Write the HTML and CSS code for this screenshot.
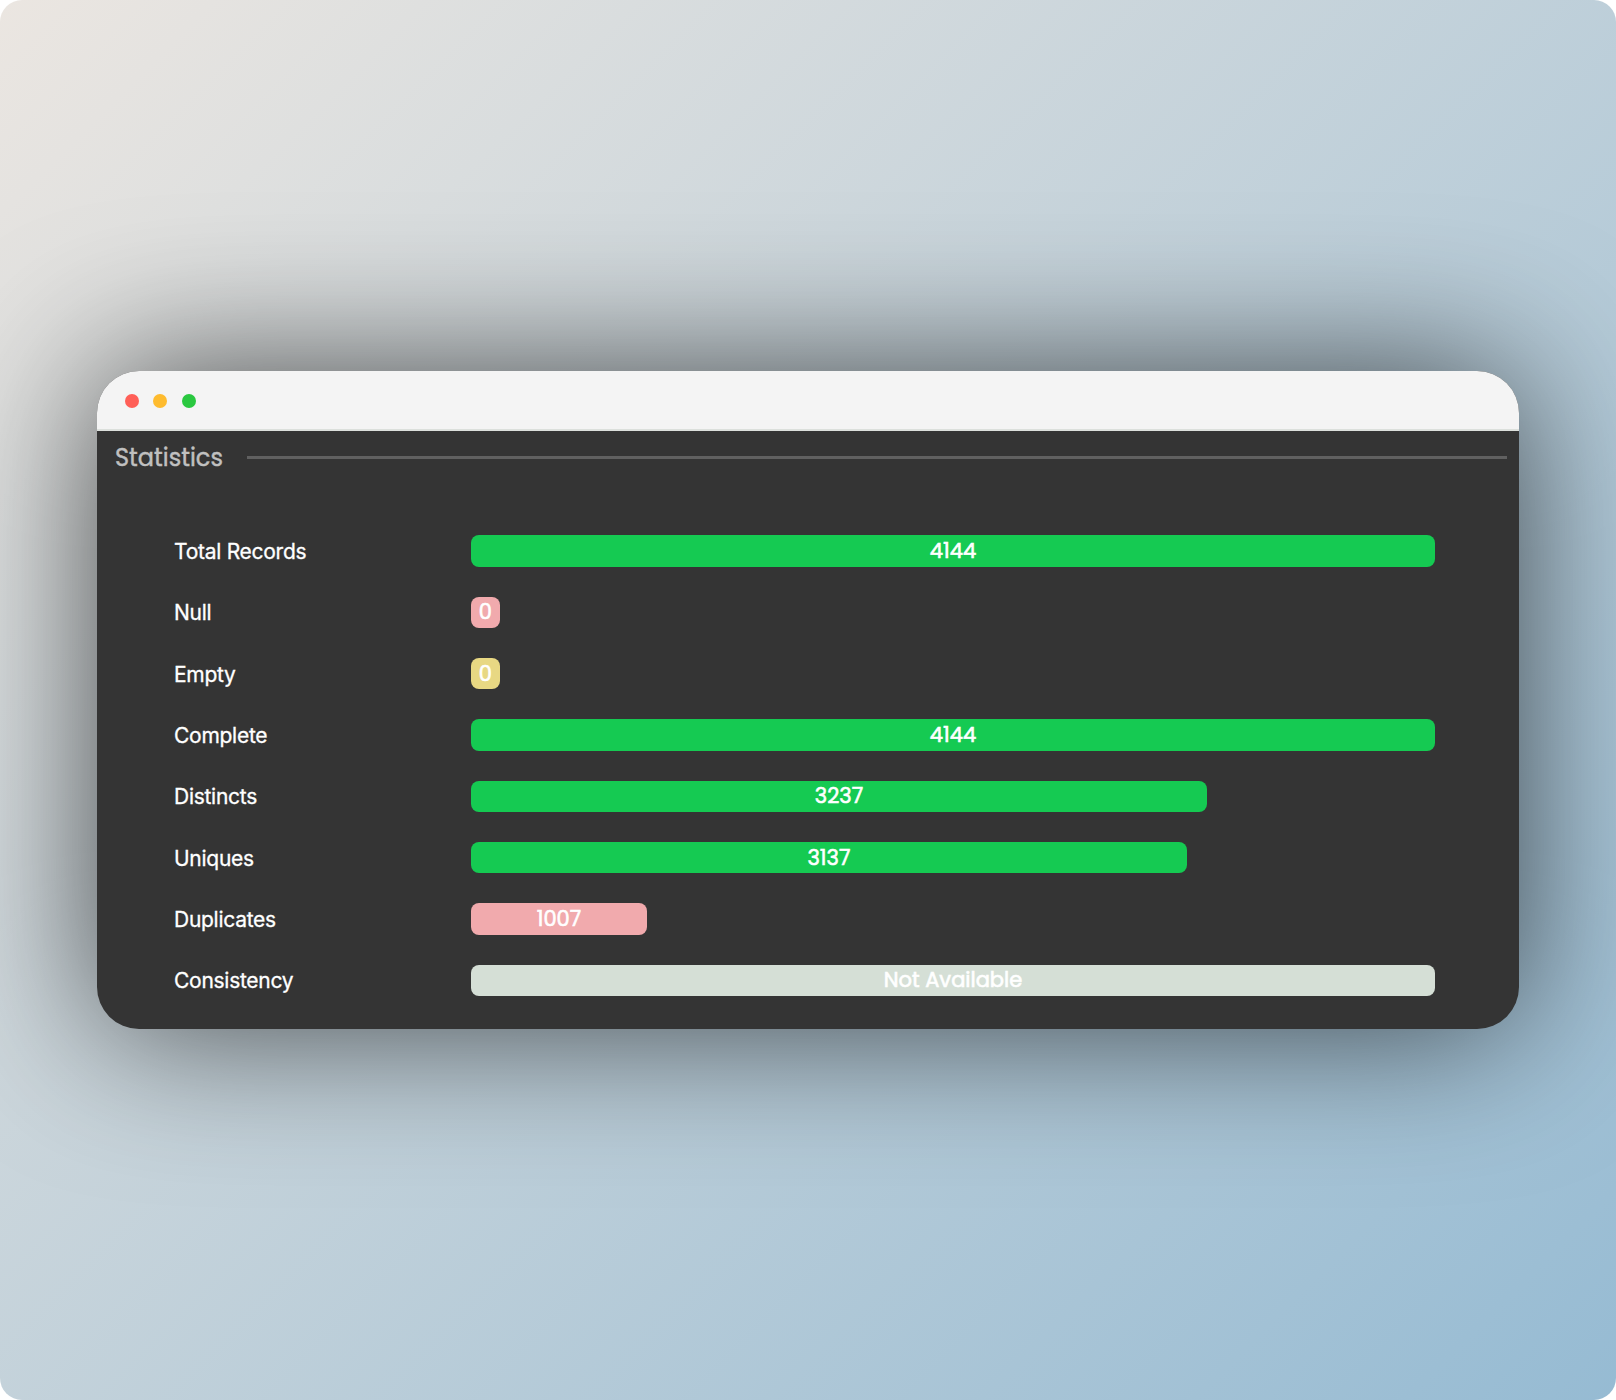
FILE: index.html
```html
<!DOCTYPE html>
<html lang="en">
<head>
<meta charset="utf-8">
<title>Statistics</title>
<link rel="stylesheet" href="styles.css">
</head>
<body>
<main class="backdrop">
  <section class="window">
    <header class="titlebar">
      <span class="dot dot-close"></span>
      <span class="dot dot-minimize"></span>
      <span class="dot dot-zoom"></span>
    </header>
    <div class="heading">
      <h1 class="heading-text">Statistics</h1>
      <div class="heading-rule"></div>
    </div>
    <div class="rows">
      <div class="row"><span class="label">Total Records</span><div class="track"><div class="bar good" style="width:100%"><span class="value">4144</span></div></div></div>
      <div class="row"><span class="label">Null</span><div class="track"><div class="bar bad" style="width:28.5px"><span class="value">0</span></div></div></div>
      <div class="row"><span class="label">Empty</span><div class="track"><div class="bar warn" style="width:28.5px"><span class="value">0</span></div></div></div>
      <div class="row"><span class="label">Complete</span><div class="track"><div class="bar good" style="width:100%"><span class="value">4144</span></div></div></div>
      <div class="row"><span class="label">Distincts</span><div class="track"><div class="bar good" style="width:76.35%"><span class="value">3237</span></div></div></div>
      <div class="row"><span class="label">Uniques</span><div class="track"><div class="bar good" style="width:74.27%"><span class="value">3137</span></div></div></div>
      <div class="row"><span class="label">Duplicates</span><div class="track"><div class="bar bad" style="width:18.25%"><span class="value">1007</span></div></div></div>
      <div class="row"><span class="label">Consistency</span><div class="track"><div class="bar muted" style="width:100%"><span class="value">Not Available</span></div></div></div>
    </div>
  </section>
</main>
</body>
</html>
```
FILE: styles.css
```css
* { box-sizing: border-box; }

body {
  margin: 0;
  background: #fff;
  font-family: Inter, "Liberation Sans", sans-serif;
}

.backdrop {
  display: flex;
  align-items: center;
  justify-content: center;
  height: 1400px;
  border-radius: 22px;
  overflow: hidden;
  background: linear-gradient(135deg, #ebe6e1 0%, #96bbd3 100%);
}

.window {
  width: 1422px;
  height: 658px;
  border-radius: 42px;
  overflow: hidden;
  background: #343434;
  box-shadow: 0 0 150px rgba(0, 0, 0, 0.66);
}

.titlebar {
  display: flex;
  align-items: center;
  gap: 14.2px;
  height: 60px;
  padding: 2px 0 0 28.2px;
  background: #f4f4f4;
  border-bottom: 2px solid #dce0dc;
}

.dot { width: 14px; height: 14px; border-radius: 50%; }
.dot-close { background: #ff5f57; }
.dot-minimize { background: #febb2e; }
.dot-zoom { background: #2ac840; }

.heading {
  display: flex;
  align-items: center;
  height: 53px;
  padding: 0 12px 0 18px;
}

.heading-text {
  width: 132px;
  margin: 0;
  font-family: Poppins, Inter, sans-serif;
  font-size: 24px;
  font-weight: 400;
  line-height: 36px;
  color: #c0c0c0;
  -webkit-text-stroke: 0.4px #c0c0c0;
}

.heading-rule { flex: 1; height: 3px; background: #606060; }

.rows {
  display: flex;
  flex-direction: column;
  gap: 29.97px;
  padding: 51.2px 84px 0 77px;
}

.row { display: flex; align-items: center; height: 31.4px; }

.label {
  width: 297px;
  padding-top: 1px;
  font-size: 21px;
  line-height: 31px;
  letter-spacing: -0.27px;
  color: #fff;
  -webkit-text-stroke: 0.3px #fff;
}

.track { flex: 1; }

.bar {
  display: flex;
  align-items: center;
  justify-content: center;
  height: 31.4px;
  border-radius: 8px;
}

.good { background: #15ca52; }
.bad { background: #f1aaad; }
.warn { background: #e8d883; }
.muted { background: #d5dfd6; }

.value {
  font-family: Poppins, Inter, sans-serif;
  font-size: 21px;
  font-weight: 400;
  line-height: 28px;
  color: #fff;
  white-space: nowrap;
  -webkit-text-stroke: 0.6px #fff;
}
```
